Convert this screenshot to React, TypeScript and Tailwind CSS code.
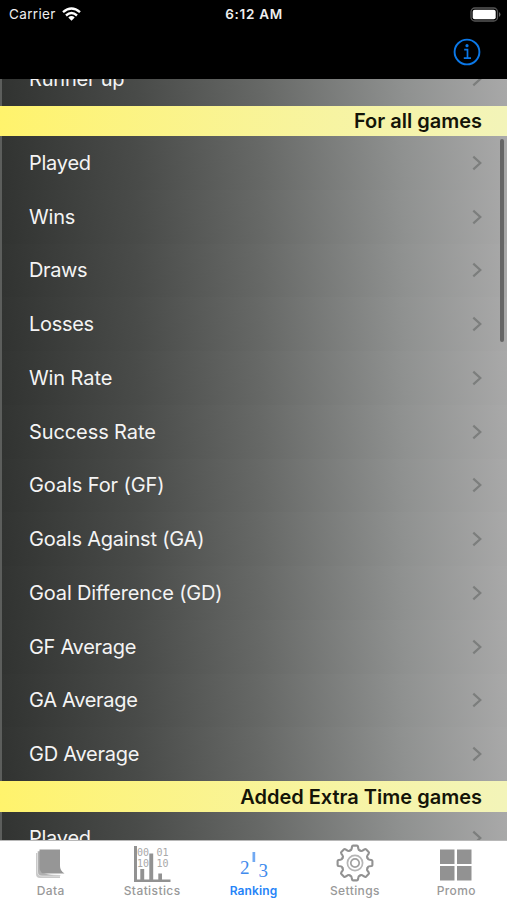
import React from "react";

type Row = { label: string; tracking: string };

const ROWS: Row[] = [
  { label: "Played", tracking: "tracking-[-0.25px]" },
  { label: "Wins", tracking: "tracking-[-0.2px]" },
  { label: "Draws", tracking: "tracking-[-0.4px]" },
  { label: "Losses", tracking: "tracking-[-0.3px]" },
  { label: "Win Rate", tracking: "tracking-[-0.1px]" },
  { label: "Success Rate", tracking: "tracking-[-0.1px]" },
  { label: "Goals For (GF)", tracking: "tracking-[-0.1px]" },
  { label: "Goals Against (GA)", tracking: "tracking-[-0.2px]" },
  { label: "Goal Difference (GD)", tracking: "tracking-[-0.15px]" },
  { label: "GF Average", tracking: "tracking-[-0.3px]" },
  { label: "GA Average", tracking: "tracking-[-0.3px]" },
  { label: "GD Average", tracking: "tracking-[-0.25px]" },
];

function ListRow({ label, tracking }: Row) {
  return (
    <div className="flex h-[53.75px] shrink-0 items-center justify-between border-l-2 border-[#5c5e5c] bg-[linear-gradient(83deg,#313331_0%,#494b49_27%,#666866_51%,#8f9190_79%,#a9a9a9_100%)] pl-[27px] pr-[25px]">
      <span className={`whitespace-nowrap text-[20px] leading-6 text-[#f4f4f4] ${tracking}`}>{label}</span>
      <svg width="10" height="16" viewBox="0 0 10 16" fill="none" stroke="#7c7e7d" strokeWidth="2.200">
        <path d="M1.300 1.600 8.300 8 1.300 14.400" />
      </svg>
    </div>
  );
}

function SectionHeader({ title }: { title: string }) {
  return (
    <div className="flex h-[30.5px] shrink-0 items-center justify-end bg-linear-to-r from-[#fff36c] to-[#f3f4b9] pr-[25px] pt-px">
      <span className="whitespace-nowrap text-[20px] font-semibold leading-6 tracking-[0px] text-[#141408]">{title}</span>
    </div>
  );
}

function DataIcon() {
  return (
    <svg width="40" height="38" viewBox="0 0 40 38">
      <path d="M5 9h4v20q5 3 20 3v2H9q-4 0-4-4z" fill="#c9c9c9" />
      <path d="M6.5 7h3v20q5 4 20 4v1H11q-4.500 0-4.500-5z" fill="#b0b0b0" stroke="#fff" strokeWidth=".5" />
      <path d="M8.500 5.500h20.500V22q0 5 4.500 7.500H14q-5.500 0-5.500-5.500z" fill="#969696" />
    </svg>
  );
}

function StatisticsIcon() {
  return (
    <svg width="40" height="38" viewBox="0 0 40 38">
      <g fill="#a8a8a8" fontFamily="DejaVu Sans Mono, monospace" fontSize="10">
        <text x="5" y="12">00</text>
        <text x="24.500" y="12">01</text>
        <text x="5" y="23">10</text>
        <text x="24.500" y="23">10</text>
      </g>
      <path d="M2 2h3v33.500H38.500v3H2z" fill="#929292" />
      <path d="M8.300 25h3.900v11H8.300zM17.300 9.500h3.900V36h-3.900zM26.300 29.500H30V36h-3.700z" fill="#929292" />
    </svg>
  );
}

function RankingIcon() {
  return (
    <svg width="40" height="38" viewBox="0 0 40 38" fill="#418bed" fontFamily="Liberation Serif, serif">
      <text x="6" y="29.500" fontSize="19">2</text>
      <path d="M18.500 8h2.700v10h-2.700z" fill="#71a9f2" />
      <text x="24.500" y="33" fontSize="19">3</text>
    </svg>
  );
}

const TOOTH_ANGLES = [0, 45, 90, 135, 180, 225, 270, 315];

function SettingsIcon() {
  return (
    <svg width="40" height="38" viewBox="-20 -19 40 38" fill="none" stroke="#929292">
      {TOOTH_ANGLES.map((angle) => (
        <path
          key={angle}
          d="M-5.100-12.400Q-3.500-12.900-3.300-14.500L-3-16.400Q-2.800-17.400-1.900-17.400H1.900Q2.800-17.400 3-16.400L3.300-14.500Q3.500-12.900 5.100-12.400"
          transform={`rotate(${angle})`}
          strokeWidth="2.100"
          strokeLinecap="round"
        />
      ))}
      <circle r="7.600" stroke="#b5b5b5" strokeWidth="1.700" />
      <circle r="4.200" stroke="#a0a0a0" strokeWidth="1.700" />
    </svg>
  );
}

function PromoIcon() {
  return (
    <svg width="40" height="38" viewBox="0 0 40 38" fill="#929292">
      <path d="M4 5.500h14.500V20H4zM21 5.500h14.500V20H21zM4 22h14.500v14.500H4zM21 22h14.500v14.500H21z" />
    </svg>
  );
}

function Tab({ label, active, children }: { label: string; active?: boolean; children: React.ReactNode }) {
  return (
    <div className="flex flex-1 flex-col items-center pt-[3px]">
      {children}
      <span
        className={`mt-px text-[12px] leading-4 ${
          active ? "font-semibold tracking-[0.1px] text-[#2684f8]" : "font-medium tracking-[0.4px] text-[#999999]"
        }`}
      >
        {label}
      </span>
    </div>
  );
}

export default function App() {
  return (
    <div className="flex h-[900px] w-[507px] flex-col overflow-hidden bg-black font-['Inter',sans-serif]">
      <header className="h-[79px] shrink-0">
        <div className="grid h-7 grid-cols-3 items-center pl-[9px] pr-[6px] text-[13.500px] text-[#eeeeee]">
          <div className="flex items-center gap-[6px]">
            <span className="tracking-[0.35px]">Carrier</span>
            <svg width="19" height="14" viewBox="0 0 19 14" fill="none" stroke="#fff" strokeWidth="2.400">
              <path d="M1 5.200Q9.500-2.200 18 5.200M4 8.500Q9.500 3.600 15 8.500" />
              <path d="M6.300 10.500Q9.500 7.600 12.700 10.500L9.500 13.700Z" fill="#fff" stroke="none" />
            </svg>
          </div>
          <span className="-translate-x-px whitespace-nowrap text-center font-semibold tracking-[0.7px]">6:12 AM</span>
          <svg className="justify-self-end" width="31" height="15" viewBox="0 0 31 15">
            <rect x="1" y="1" width="26.500" height="13" rx="3.800" fill="none" stroke="#555" strokeWidth="1.300" />
            <rect x="2.700" y="2.700" width="23" height="9.600" rx="2" fill="#fff" />
            <path d="M29 5q3 2.500 0 5z" fill="#666" />
          </svg>
        </div>
        <div className="flex h-12 items-center justify-end pr-[26px]">
          <svg width="28" height="28" viewBox="0 0 28 28" fill="none" stroke="#0b78e8" strokeWidth="1.900">
            <circle cx="14" cy="14" r="12.400" />
            <path d="M11.200 11.600H14.500V20M10.800 20.200H18" strokeWidth="1.700" />
            <circle cx="14" cy="7.700" r="1.600" fill="#0b78e8" stroke="none" />
          </svg>
        </div>
      </header>

      <main className="relative flex h-[761px] shrink-0 flex-col overflow-hidden">
        <div className="flex h-[26.500px] shrink-0 flex-col justify-end overflow-hidden">
          <ListRow label="Runner up" tracking="tracking-[-0.2px]" />
        </div>
        <SectionHeader title="For all games" />
        {ROWS.map((row) => (
          <ListRow key={row.label} {...row} />
        ))}
        <SectionHeader title="Added Extra Time games" />
        <ListRow label="Played" tracking="tracking-[-0.25px]" />
        <div className="absolute right-[3px] top-[60px] h-[203px] w-1 rounded-full bg-[#656565]" />
      </main>

      <nav className="flex h-[60px] shrink-0 border-t border-[#b8b8b8] bg-white">
        <Tab label="Data"><DataIcon /></Tab>
        <Tab label="Statistics"><StatisticsIcon /></Tab>
        <Tab label="Ranking" active><RankingIcon /></Tab>
        <Tab label="Settings"><SettingsIcon /></Tab>
        <Tab label="Promo"><PromoIcon /></Tab>
      </nav>
    </div>
  );
}
